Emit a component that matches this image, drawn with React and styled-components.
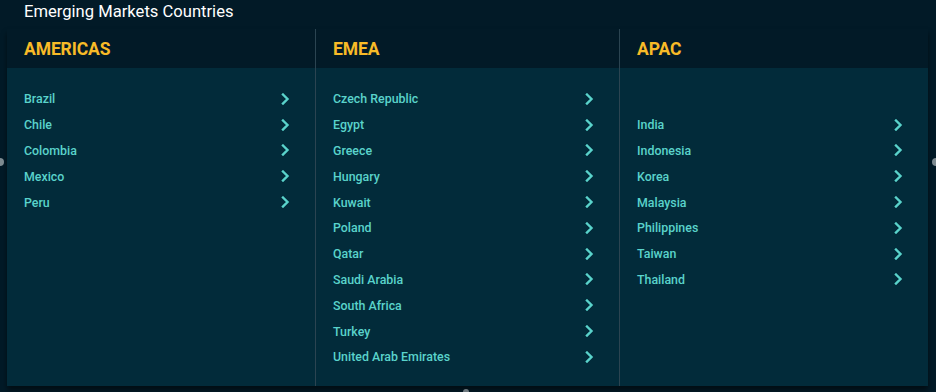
import React from "react";
import styled, { createGlobalStyle } from "styled-components";

const Global = createGlobalStyle`
  html, body { margin: 0; padding: 0; background: #021a27; }
  body { font-family: Roboto, "Liberation Sans", sans-serif; overflow: hidden; }
`;

const Page = styled.div`
  position: relative;
  width: 936px;
  height: 392px;
  background: #021a27;
  box-sizing: border-box;
  padding: 0 8px 0 7px;
`;

const Title = styled.h1`
  margin: 0;
  padding: 2px 0 0 17px;
  height: 29px;
  box-sizing: border-box;
  font-size: 16.6px;
  font-weight: 400;
  line-height: 19px;
  color: #ffffff;
`;

const Columns = styled.div`
  display: grid;
  grid-template-columns: 308px 304px 309px;
  height: 357px;
  box-shadow: 0 4px 5px rgba(0, 0, 0, 0.5);
`;

const Column = styled.section`
  display: flex;
  flex-direction: column;
  border-left: ${(p) => (p.$divided ? "1px solid rgba(120,150,160,0.35)" : "none")};
`;

const Heading = styled.h2`
  margin: 0;
  height: 39px;
  box-sizing: border-box;
  padding: 10px 0 0 ${(p) => p.$pad}px;
  font-size: 17.5px;
  font-weight: 700;
  line-height: 20px;
  color: #f8bb27;
  letter-spacing: -0.1px;
`;

const List = styled.ul`
  flex: 1;
  margin: 0;
  list-style: none;
  background: #022b3a;
  padding: 18px 0 0 0;
`;

const Item = styled.li`
  display: flex;
  align-items: center;
  justify-content: space-between;
  height: 25.8px;
  padding: 0 25px 0 ${(p) => p.$pad}px;
  font-size: 12.4px;
  font-weight: 500;
  color: #5ad3cb;
  visibility: ${(p) => (p.$blank ? "hidden" : "visible")};
`;

const Chevron = () => (
  <svg width="9" height="12" viewBox="0 0 9 12" aria-hidden="true">
    <path d="M2 1.5 L6.5 6 L2 10.5" fill="none" stroke="#5ad3cb" strokeWidth="2.4" strokeLinecap="square" strokeLinejoin="miter" />
  </svg>
);

const EdgeKnob = styled.span`
  position: absolute;
  top: 158px;
  ${(p) => (p.$side === "left" ? "left: -4px;" : "right: -4px;")}
  width: 8px;
  height: 8px;
  border-radius: 50%;
  background: #7d8a90;
`;

const BottomKnob = styled.span`
  position: absolute;
  left: 463px;
  bottom: 0;
  width: 6px;
  height: 3px;
  border-radius: 3px 3px 0 0;
  background: #6f7a80;
`;

const regions = [
  { name: "AMERICAS", pad: 17, items: ["Brazil", "Chile", "Colombia", "Mexico", "Peru"] },
  {
    name: "EMEA",
    pad: 17,
    items: [
      "Czech Republic",
      "Egypt",
      "Greece",
      "Hungary",
      "Kuwait",
      "Poland",
      "Qatar",
      "Saudi Arabia",
      "South Africa",
      "Turkey",
      "United Arab Emirates",
    ],
  },
  {
    name: "APAC",
    pad: 17,
    items: [null, "India", "Indonesia", "Korea", "Malaysia", "Philippines", "Taiwan", "Thailand"],
  },
];

export default function App() {
  return (
    <Page>
      <Global />
      <Title>Emerging Markets Countries</Title>
      <Columns>
        {regions.map((r, i) => (
          <Column key={r.name} $divided={i > 0}>
            <Heading $pad={r.pad}>{r.name}</Heading>
            <List>
              {r.items.map((it, j) => (
                <Item key={j} $pad={r.pad} $blank={!it}>
                  <span>{it || "\u00a0"}</span>
                  <Chevron />
                </Item>
              ))}
            </List>
          </Column>
        ))}
      </Columns>
      <EdgeKnob $side="left" />
      <EdgeKnob $side="right" />
      <BottomKnob />
    </Page>
  );
}
